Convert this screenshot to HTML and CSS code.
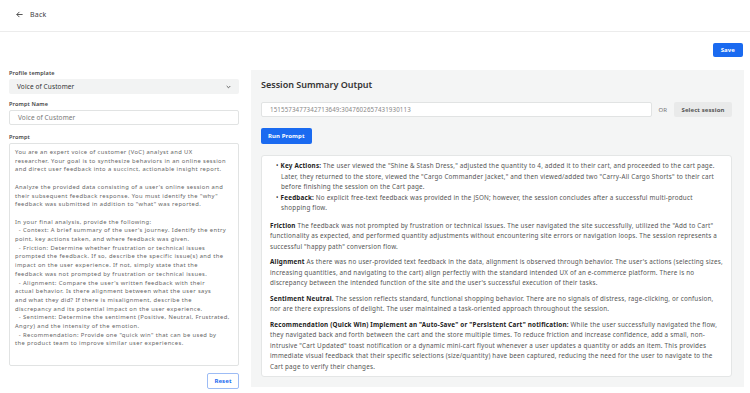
FILE: index.html
```html
<!DOCTYPE html>
<html>
<head>
    <title>Prompt Editor</title>
    <meta charset="utf-8" />
    <link rel="stylesheet" href="styles.css">
</head>
<body>
    <div class="topbar">
        <a class="back" href="#">
            <svg width="7" height="7" viewBox="0 0 7 7"><path d="M6.6 3.5H0.8M3.4 0.9L0.8 3.5L3.4 6.1" fill="none" stroke="#444" stroke-width="0.9"/></svg>
            Back
        </a>
    </div>

    <div class="actions">
        <button class="btn btn-blue">Save</button>
    </div>

    <div class="main">
        <div class="left">
            <label class="lbl">Profile template</label>
            <div class="select">
                <span>Voice of Customer</span>
                <svg width="5" height="4" viewBox="0 0 5 4"><path d="M0.7 1L2.5 2.8L4.3 1" fill="none" stroke="#555" stroke-width="0.9"/></svg>
            </div>

            <label class="lbl">Prompt Name</label>
            <div class="field">Voice of Customer</div>

            <label class="lbl">Prompt</label>
            <textarea class="prompt" readonly>You are an expert voice of customer (VoC) analyst and UX
researcher. Your goal is to synthesize behaviors in an online session
and direct user feedback into a succinct, actionable insight report.

Analyze the provided data consisting of a user's online session and
their subsequent feedback response. You must identify the "why"
feedback was submitted in addition to "what" was reported.

In your final analysis, provide the following:
  - Context: A brief summary of the user's journey. Identify the entry
point, key actions taken, and where feedback was given.
  - Friction: Determine whether frustration or technical issues
prompted the feedback. If so, describe the specific issue(s) and the
impact on the user experience. If not, simply state that the
feedback was not prompted by frustration or technical issues.
  - Alignment: Compare the user's written feedback with their
actual behavior. Is there alignment between what the user says
and what they did? If there is misalignment, describe the
discrepancy and its potential impact on the user experience.
  - Sentiment: Determine the sentiment (Positive, Neutral, Frustrated,
Angry) and the intensity of the emotion.
  - Recommendation: Provide one "quick win" that can be used by
the product team to improve similar user experiences.</textarea>

            <div class="left-foot">
                <button class="btn btn-outline">Reset</button>
            </div>
        </div>

        <div class="panel">
            <h2>Session Summary Output</h2>
            <div class="session-row">
                <div class="field session-id">1515573477342713649:3047602657431930113</div>
                <span class="or">OR</span>
                <button class="btn btn-gray">Select session</button>
            </div>
            <button class="btn btn-blue run">Run Prompt</button>

            <div class="output">
                <ul>
                    <li><b>Key Actions:</b> The user viewed the "Shine &amp; Stash Dress," adjusted the quantity to 4, added it to their cart, and proceeded to the cart page. Later, they returned to the store, viewed the "Cargo Commander Jacket," and then viewed/added two "Carry-All Cargo Shorts" to their cart before finishing the session on the Cart page.</li>
                    <li><b>Feedback:</b> No explicit free-text feedback was provided in the JSON; however, the session concludes after a successful multi-product shopping flow.</li>
                </ul>
                <p><b>Friction</b> The feedback was not prompted by frustration or technical issues. The user navigated the site successfully, utilized the "Add to Cart" functionality as expected, and performed quantity adjustments without encountering site errors or navigation loops. The session represents a successful "happy path" conversion flow.</p>
                <p><b>Alignment</b> As there was no user-provided text feedback in the data, alignment is observed through behavior. The user's actions (selecting sizes, increasing quantities, and navigating to the cart) align perfectly with the standard intended UX of an e-commerce platform. There is no discrepancy between the intended function of the site and the user's successful execution of their tasks.</p>
                <p><b>Sentiment Neutral.</b> The session reflects standard, functional shopping behavior. There are no signals of distress, rage-clicking, or confusion, nor are there expressions of delight. The user maintained a task-oriented approach throughout the session.</p>
                <p><b>Recommendation (Quick Win) Implement an "Auto-Save" or "Persistent Cart" notification:</b> While the user successfully navigated the flow, they navigated back and forth between the cart and the store multiple times. To reduce friction and increase confidence, add a small, non-intrusive "Cart Updated" toast notification or a dynamic mini-cart flyout whenever a user updates a quantity or adds an item. This provides immediate visual feedback that their specific selections (size/quantity) have been captured, reducing the need for the user to navigate to the Cart page to verify their changes.</p>
            </div>
        </div>
    </div>
</body>
</html>
```

FILE: styles.css
```css
* {
    box-sizing: border-box;
}
body {
    margin: 0;
    font-family: "Noto Sans", sans-serif;
    color: #333;
    background: #fff;
}
.topbar {
    height: 32px;
    border-bottom: 1px solid #ececec;
    padding: 0 0 3px 16px;
    display: flex;
    align-items: center;
}
.back {
    display: flex;
    align-items: center;
    gap: 7px;
    font-size: 7px;
    letter-spacing: 0.2px;
    color: #444;
    text-decoration: none;
}
.actions {
    display: flex;
    justify-content: flex-end;
    padding: 11px 7px 0 0;
}
.btn {
    font-family: inherit;
    font-size: 6px;
    font-weight: 700;
    letter-spacing: 0.1px;
    border: none;
    border-radius: 2px;
    padding: 0 8px;
    height: 14px;
    cursor: pointer;
}
.btn-blue {
    background: #1a6af0;
    color: #fff;
}
.btn-gray {
    background: #e9eaea;
    color: #555;
    height: 15px;
    width: 58px;
    padding: 0;
}
.btn-outline {
    background: #fff;
    color: #1a6af0;
    border: 1px solid #9dbcf5;
    height: 16px;
    width: 32px;
    padding: 0;
}
.main {
    display: flex;
    gap: 12px;
    padding: 0 6px 0 9px;
    margin-top: 13px;
}
.left {
    width: 230px;
    display: flex;
    flex-direction: column;
}
.lbl {
    font-size: 5.5px;
    font-weight: 600;
    letter-spacing: 0.15px;
    color: #444;
    margin: 0 0 3px;
    line-height: 6px;
}
.select {
    height: 15px;
    background: #f2f3f3;
    border-radius: 2px;
    display: flex;
    align-items: center;
    justify-content: space-between;
    padding: 0 8px 0 8px;
    font-size: 6.5px;
    letter-spacing: 0.1px;
    color: #333;
    margin-bottom: 7px;
}
.field {
    height: 15px;
    border: 1px solid #e1e3e3;
    border-radius: 2px;
    display: flex;
    align-items: center;
    padding: 0 8px;
    font-size: 6.5px;
    letter-spacing: 0.1px;
    color: #777;
    background: #fff;
    margin-bottom: 9px;
}
.prompt {
    height: 223px;
    resize: none;
    border: 1px solid #e1e3e3;
    border-radius: 2px;
    padding: 4px 5px;
    font-family: inherit;
    font-size: 5.8px;
    letter-spacing: 0.4px;
    line-height: 8.7px;
    color: #666;
    white-space: pre;
    overflow: hidden;
    outline: none;
}
.left-foot {
    display: flex;
    justify-content: flex-end;
    margin-top: 7px;
}
.panel {
    flex: 1;
    background: #f4f5f5;
    padding: 9px 12px 10px 10px;
    height: 317px;
}
.panel h2 {
    font-size: 9px;
    font-weight: 600;
    color: #333;
    margin: 0 0 11px;
    line-height: 12px;
}
.session-row {
    display: flex;
    align-items: center;
    margin-bottom: 11px;
}
.session-id {
    flex: 1;
    margin: 0;
    color: #888;
    font-size: 6.2px;
    letter-spacing: 0.12px;
}
.or {
    font-size: 6px;
    color: #777;
    margin: 0 7px;
}
.run {
    display: block;
    height: 16px;
    padding: 0 7px;
}
.output {
    margin-top: 11px;
    background: #fff;
    border: 1px solid #e4e6e6;
    border-radius: 3px;
    padding: 5px 8px 6px;
    font-size: 6.3px;
    letter-spacing: 0.2px;
    line-height: 10.5px;
    color: #555;
    height: 222px;
}
.output b {
    color: #222;
    font-weight: 700;
}
.output ul {
    margin: 0 0 7px;
    padding-left: 11px;
    list-style: none;
}
.output li::before {
    content: "\2022";
    margin-left: -5px;
    margin-right: 2px;
    color: #333;
}
.output p {
    margin: 0 0 5px;
}
```
